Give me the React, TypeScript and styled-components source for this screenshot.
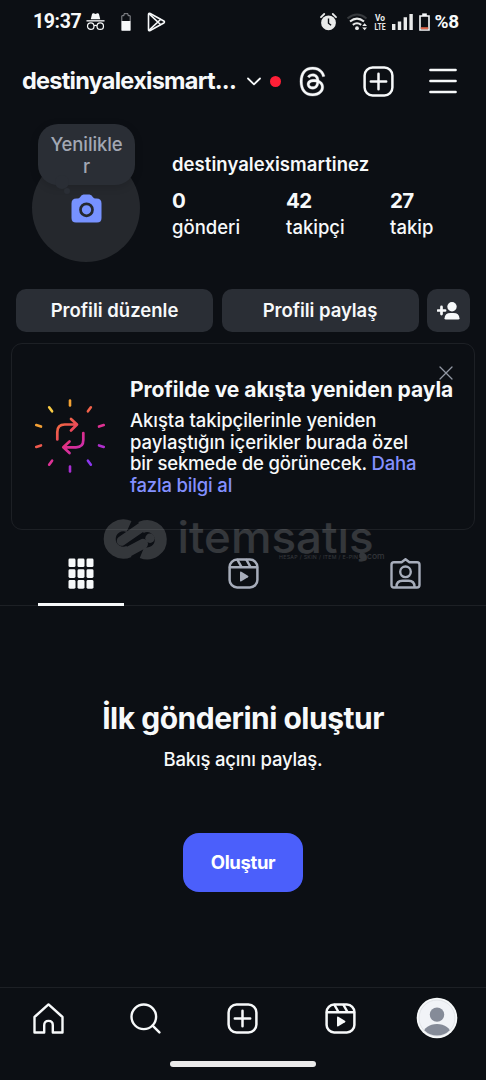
import React from "react";
import styled, { createGlobalStyle } from "styled-components";
import { FaThreads } from "react-icons/fa6";

const GlobalStyle = createGlobalStyle`
  * { box-sizing: border-box; }
  body { margin: 0; background: #0c0f14; }
  button { border: 0; padding: 0; margin: 0; background: none; color: inherit; font: inherit; }
`;

const Screen = styled.div`
  position: relative;
  display: flex;
  flex-direction: column;
  width: 486px;
  height: 1080px;
  overflow: hidden;
  background: #0c0f14;
  color: #f7f9fa;
  font-family: Inter, "Liberation Sans", sans-serif;
`;

const Text = styled.span<{ $size: number; $line: number; $weight?: number; $track?: number; $color?: string; $top?: number }>`
  display: block;
  white-space: nowrap;
  margin-top: ${(p) => p.$top ?? 0}px;
  font-size: ${(p) => p.$size}px;
  line-height: ${(p) => p.$line}px;
  font-weight: ${(p) => p.$weight ?? 500};
  letter-spacing: ${(p) => p.$track ?? 0}px;
  color: ${(p) => p.$color ?? "inherit"};
`;

const StatusBar = styled.div`
  display: flex;
  justify-content: space-between;
  align-items: center;
  height: 43px;
  padding: 0 27px 0 33px;
  font-family: Roboto, sans-serif;
`;

const Group = styled.div<{ $gap?: number; $left?: number }>`
  display: flex;
  align-items: center;
  gap: ${(p) => p.$gap ?? 0}px;
  margin-left: ${(p) => p.$left ?? 0}px;
`;

const Header = styled.header`
  display: flex;
  align-items: center;
  justify-content: space-between;
  height: 76px;
  padding: 0 29px 0 22px;
`;

const UserName = styled.div`
  width: 216px;
`;

const RedDot = styled.i`
  width: 11px;
  height: 11px;
  border-radius: 50%;
  background: #ff1f37;
`;

const Profile = styled.section`
  display: flex;
  height: 170px;
  padding: 35px 0 0 32px;
`;

const Avatar = styled.div`
  position: relative;
  display: flex;
  align-items: center;
  justify-content: center;
  width: 108px;
  height: 108px;
  border-radius: 50%;
  background: #25282d;
`;

const Bubble = styled.div`
  position: absolute;
  left: 6px;
  top: -30px;
  width: 97px;
  height: 61px;
  padding-top: 9px;
  border-radius: 20px;
  background: #2a2e35;
  box-shadow: 0 2px 8px rgba(0, 0, 0, 0.15);
  text-align: center;
  &::before,
  &::after {
    content: "";
    position: absolute;
    border-radius: 50%;
    background: #2a2e35;
  }
  &::before { left: 17px; top: 51px; width: 14px; height: 14px; }
  &::after { left: 26px; top: 64px; width: 6px; height: 6px; }
`;

const Details = styled.div`
  margin-top: -2px;
  padding-left: 32px;
`;

const Stats = styled.div`
  display: grid;
  grid-template-columns: 114px 104px 60px;
  margin-top: 12px;
`;

const Actions = styled.div`
  display: grid;
  grid-template-columns: 197px 197px 43px;
  gap: 8px 8.5px;
  height: 43px;
  margin: 0 16px;
`;

const ActionButton = styled.button`
  display: flex;
  align-items: center;
  justify-content: center;
  border-radius: 10px;
  background: #2a2e35;
`;

const Card = styled.section`
  position: relative;
  display: flex;
  width: 464px;
  height: 187px;
  margin: 11px 0 0 11px;
  border: 1px solid #1d2025;
  border-radius: 11px;
`;

const CardArt = styled.div`
  width: 118px;
  padding: 54px 0 0 21px;
`;

const CardBody = styled.div`
  padding-top: 33px;
`;

const CardText = styled.div`
  margin-top: 7px;
`;

const Accent = styled.span`
  color: #8390ff;
`;

const CloseIcon = styled.svg`
  position: absolute;
  left: 427px;
  top: 22px;
`;

const Tabs = styled.nav`
  display: grid;
  grid-template-columns: repeat(3, 1fr);
  height: 76px;
  border-bottom: 1px solid #1d2025;
`;

const Tab = styled.button<{ $active?: boolean }>`
  display: flex;
  justify-content: center;
  height: 76px;
  margin: 0 38px;
  padding-top: 28px;
  border-bottom: ${(p) => (p.$active ? "3px solid #f7f9fa" : "0")};
  color: ${(p) => (p.$active ? "#f7f9fa" : "#a7adbb")};
`;

const Empty = styled.main`
  display: flex;
  flex: 1;
  flex-direction: column;
  align-items: center;
  padding-top: 92px;
`;

const CreateButton = styled.button`
  display: flex;
  align-items: center;
  justify-content: center;
  width: 120px;
  height: 59px;
  margin-top: 62px;
  border-radius: 16px;
  background: #4b5ffb;
  color: #fff;
`;

const BottomNav = styled.nav`
  display: grid;
  grid-template-columns: repeat(5, 1fr);
  height: 74px;
  border-top: 1px solid #1d2025;
`;

const NavItem = styled.button`
  display: flex;
  align-items: center;
  justify-content: center;
  height: 60px;
`;

const GestureArea = styled.div`
  display: flex;
  justify-content: center;
  height: 19px;
`;

const GestureBar = styled.i`
  width: 146px;
  height: 6px;
  border-radius: 3px;
  background: #ebebeb;
`;

const Watermark = styled.svg`
  position: absolute;
  left: 100px;
  top: 505px;
  opacity: 0.165;
  pointer-events: none;
`;

const line = { fill: "none", stroke: "currentColor", strokeLinecap: "round", strokeLinejoin: "round" } as const;

const Incognito = () => (
  <svg width="19" height="19" viewBox="0 0 20 19">
    <path d="M5 7 6.3 1.8Q6.8.4 8.2.9L10 1.5l1.8-.6q1.4-.5 1.9.9L15 7z" fill="#f7f9fa" />
    <path d="M.5 8.8h19" stroke="#f7f9fa" strokeWidth="1.4" />
    <g fill="none" stroke="#f7f9fa" strokeWidth="1.3">
      <circle cx="5" cy="14.4" r="3.4" />
      <circle cx="15" cy="14.4" r="3.4" />
      <path d="M8.4 14q1.6-1 3.2 0" />
    </g>
  </svg>
);

const BatteryHalf = () => (
  <svg width="10" height="18" viewBox="0 0 10 18">
    <path d="M3 .7h4v2h2.2v14.6H.8V2.7H3z" fill="none" stroke="#8e9195" strokeWidth="1" />
    <path d="M.6 8h8.8v9.6H.6z" fill="#f7f9fa" />
  </svg>
);

const PlayStore = () => (
  <svg width="19" height="20" viewBox="0 0 19 20">
    <g {...line} stroke="#f7f9fa" strokeWidth="1.6">
      <path d="M1.5 2.6Q1.5.8 3.2 1.5L16.8 9q1.3 1 0 2L3.2 18.5q-1.7.7-1.7-1.1z" />
      <path d="M2.2 1.8 13.5 12.5M2.2 18.2 13.5 7.5" />
    </g>
  </svg>
);

const Alarm = () => (
  <svg width="17" height="18" viewBox="0 0 17 18">
    <circle cx="8.5" cy="9.8" r="7.4" fill="#e9eaea" />
    <path d="M1 4.2 4.2 1M16 4.2 12.8 1" stroke="#e9eaea" strokeWidth="1.8" strokeLinecap="round" />
    <path d="M8.5 5.6v4.6l2.6 2" fill="none" stroke="#0c0f14" strokeWidth="1.4" />
  </svg>
);

const Wifi = () => (
  <svg width="21" height="18" viewBox="0 0 21 18">
    <g fill="none" strokeWidth="2">
      <path d="M.5 5.4Q10-2.4 19.5 5.4" stroke="#36393d" />
      <path d="M3 8.6q7-6 14 0" stroke="#e9eaea" />
      <path d="M5.8 11.9q4.2-3.4 8.4 0" stroke="#e9eaea" />
    </g>
    <circle cx="10" cy="15.2" r="1.9" fill="#e9eaea" />
    <path d="m15.2 13 2.4-2.8L20 13zM15.2 14.4l2.4 2.8 2.4-2.8z" fill="#e9eaea" />
  </svg>
);

const VoLte = () => (
  <svg width="12" height="26" viewBox="0 -5 12 26" overflow="visible" fill="#e9eaea" fontFamily="Roboto" fontWeight="700">
    <text x="1" y="6.8" fontSize="8.4" textLength="10" lengthAdjust="spacingAndGlyphs">Vo</text>
    <text x="0.5" y="16.2" fontSize="8.4" textLength="11" lengthAdjust="spacingAndGlyphs">LTE</text>
  </svg>
);

const Signal = () => (
  <svg width="21" height="17" viewBox="0 0 21 17" fill="#e9eaea">
    <path d="M0 11h3.4v6H0zM5.8 8.4h3.4V17H5.8zM11.6 4.2H15V17h-3.4zM17.4 1h3.4v16h-3.4z" />
  </svg>
);

const BatteryLow = () => (
  <svg width="11" height="18" viewBox="0 0 11 18">
    <path d="M1 3h9v14H1z" fill="none" stroke="#f7f9fa" strokeWidth="1.6" />
    <path d="M3.2.4h4.6V3H3.2z" fill="#f7f9fa" />
    <path d="M1.8 14.2h7.4v2H1.8z" fill="#e0664a" />
  </svg>
);

const Chevron = () => (
  <svg width="14" height="9" viewBox="0 0 14 9">
    <path d="m1 1.5 6 5.8 6-5.8" {...line} strokeWidth="1.8" />
  </svg>
);

const PlusSquare = () => (
  <svg width="31" height="31" viewBox="0 0 31 31" {...line} strokeWidth="2.5">
    <rect x="1.6" y="1.6" width="27.8" height="27.8" rx="8" />
    <path d="M15.5 7.8v15.4M7.8 15.5h15.4" />
  </svg>
);

const Menu = () => (
  <svg width="28" height="26" viewBox="0 0 28 26">
    <path d="M1.4 2h25.2M1.4 13h25.2M1.4 24h25.2" {...line} strokeWidth="2.5" />
  </svg>
);

const Camera = () => (
  <svg width="31" height="29" viewBox="0 0 31 29">
    <path d="M9 3.2Q10.5.5 12.5.5h6q2 0 3.5 2.7.8 1.3 2.5 1.3h1q5 0 5 5V24q0 4.5-4.5 4.5H5Q.5 28.5.5 24V9.5q0-5 5-5h1Q8.2 4.5 9 3.2z" fill="#7792ff" />
    <circle cx="15.5" cy="15.8" r="6" fill="none" stroke="#25282d" strokeWidth="2.7" />
  </svg>
);

const AddPerson = () => (
  <svg width="23" height="18" viewBox="0 0 23 18">
    <path d="M4.5 4.9v7.2M.9 8.5h7.2" {...line} strokeWidth="2.7" />
    <circle cx="15" cy="4.8" r="4.7" fill="currentColor" />
    <path d="M7.5 16.3q.4-5.3 6-5.3h3q5.6 0 6 5.3 0 1.3-1.3 1.3H8.8q-1.3 0-1.3-1.3z" fill="currentColor" />
  </svg>
);

const rays: [number, string][] = [
  [0, "#f3a234"], [36, "#f2624a"], [72, "#df3293"], [108, "#b02fcd"], [144, "#8a37ee"],
  [180, "#a92ed3"], [216, "#dd3296"], [252, "#f05a4e"], [288, "#f5a035"], [324, "#f9cb45"],
];

const RepostArt = () => (
  <svg width="74" height="76" viewBox="-37 -38 74 76">
    <defs>
      <linearGradient id="warm" gradientUnits="userSpaceOnUse" x1="-14" y1="-16" x2="14" y2="16">
        <stop offset="0" stopColor="#f5763a" />
        <stop offset="0.5" stopColor="#e8405f" />
        <stop offset="0.6" stopColor="#e02f86" />
        <stop offset="1" stopColor="#c72dbb" />
      </linearGradient>
    </defs>
    {rays.map(([angle, color]) => (
      <path key={angle} d="M0-35.5v5" transform={`rotate(${angle})`} stroke={color} strokeWidth="2.6" strokeLinecap="round" />
    ))}
    <g fill="none" stroke="url(#warm)" strokeWidth="2.7" strokeLinecap="round" strokeLinejoin="round">
      <path d="M-12.7 3.5V-4Q-12.7-11.5-5.2-11.5H6.5M1-17l6 5.5L1-5.5" />
      <path d="M13.3-3V4Q13.3 11.3 6 11.3H-6M-.5 5.5-6.7 11.3-.5 17" />
    </g>
  </svg>
);

const Grid = () => (
  <svg width="26" height="31" viewBox="0 0 26 31" fill="currentColor">
    {[0, 1, 2].flatMap((r) =>
      [0, 1, 2].map((c) => <rect key={`${r}${c}`} x={0.5 + c * 9} y={0.5 + r * 10.8} width="7" height="8.6" rx="1.4" />)
    )}
  </svg>
);

const Reels = () => (
  <svg width="31" height="31" viewBox="0 0 31 31">
    <g {...line} strokeWidth="2.5">
      <rect x="1.6" y="1.6" width="27.8" height="27.8" rx="7.5" />
      <path d="M2 9.2h27M9.5 2l4 7M18.5 2l4 7" />
    </g>
    <path d="M12 14.6q0-1.600 1.400-.8l6.500 3.900q1.300.8 0 1.600l-6.500 3.900q-1.400.8-1.400-.8z" fill="currentColor" />
  </svg>
);

const Tagged = () => (
  <svg width="31" height="31" viewBox="0 0 31 31">
    <g {...line} strokeWidth="2.4">
      <path d="M4 4.2h7.6L15.5 1.2l3.9 3H27q2.5 0 2.5 2.5v20.3q0 2.5-2.5 2.5H4q-2.5 0-2.5-2.5V6.7Q1.5 4.2 4 4.2z" />
      <circle cx="15.5" cy="13.8" r="5.3" />
      <path d="M6.5 28.8q0-6 6-6h6q6 0 6 6" />
    </g>
  </svg>
);

const Home = () => (
  <svg width="31" height="31" viewBox="0 0 31 31">
    <path d="M1.5 14 15.5 1.4 29.5 14v15.5H19.8v-7.3q0-4.3-4.3-4.3t-4.3 4.3v7.3H1.5z" {...line} strokeWidth="2.4" />
  </svg>
);

const Search = () => (
  <svg width="31" height="31" viewBox="0 0 31 31">
    <g {...line} strokeWidth="2.4">
      <circle cx="13.8" cy="13.8" r="12.3" />
      <path d="m22.6 22.6 6.8 6.8" />
    </g>
  </svg>
);

const NavAvatar = () => (
  <svg width="42" height="42" viewBox="0 0 42 42">
    <defs>
      <clipPath id="face"><circle cx="21" cy="21" r="17.6" /></clipPath>
    </defs>
    <circle cx="21" cy="21" r="20.3" fill="#f7f9fa" />
    <circle cx="21" cy="21" r="18" fill="#f1f3f7" stroke="#dadde2" strokeWidth=".8" />
    <g fill="#858b98" clipPath="url(#face)">
      <circle cx="21" cy="17.6" r="7.2" />
      <ellipse cx="21" cy="37.5" rx="14" ry="10.5" />
    </g>
  </svg>
);

const stats = [["0", "gönderi"], ["42", "takipçi"], ["27", "takip"]];

export default function App() {
  return (
    <Screen>
      <GlobalStyle />
      <StatusBar>
        <Group>
          <Text $size={19.5} $line={24} $weight={700} $track={-0.4}>19:37</Text>
          <Group $left={5} $gap={16}>
            <Incognito />
            <BatteryHalf />
            <PlayStore />
          </Group>
        </Group>
        <Group $gap={6}>
          <Group $gap={10}><Alarm /><Wifi /></Group>
          <VoLte />
          <Signal />
          <BatteryLow />
          <Group $left={-2}><Text $size={19} $line={24} $weight={700} $track={-0.2}>%8</Text></Group>
        </Group>
      </StatusBar>

      <Header>
        <Group $gap={9}>
          <UserName><Text $size={23.5} $line={30} $weight={700} $track={-0.75}>destinyalexismart...</Text></UserName>
          <Chevron />
          <RedDot />
        </Group>
        <Group $gap={35}>
          <FaThreads size={31} stroke="currentColor" strokeWidth={5} />
          <PlusSquare />
          <Menu />
        </Group>
      </Header>

      <Profile>
        <Avatar>
          <Camera />
          <Bubble>
            <Text $size={18.5} $line={22} $track={-0.1} $color="#a2a8b4">Yenilikle</Text>
            <Text $size={18.5} $line={22} $color="#a2a8b4">r</Text>
          </Bubble>
        </Avatar>
        <Details>
          <Text $size={18.5} $line={24} $weight={600} $track={0.06}>destinyalexismartinez</Text>
          <Stats>
            {stats.map(([value, label]) => (
              <div key={label}>
                <Text $size={20.5} $line={26} $weight={700} $track={-0.6}>{value}</Text>
                <Text $size={18.5} $line={26}>{label}</Text>
              </div>
            ))}
          </Stats>
        </Details>
      </Profile>

      <Actions>
        <ActionButton><Text $size={18.5} $line={24} $weight={600} $top={-1}>Profili düzenle</Text></ActionButton>
        <ActionButton><Text $size={18.5} $line={24} $weight={600} $top={-1} $track={-0.05}>Profili paylaş</Text></ActionButton>
        <ActionButton><AddPerson /></ActionButton>
      </Actions>

      <Card>
        <CardArt><RepostArt /></CardArt>
        <CardBody>
          <Text $size={21} $line={26} $weight={700} $track={-0.05}>Profilde ve akışta yeniden payla</Text>
          <CardText>
            <Text $size={18.5} $line={21.5} $track={-0.06}>Akışta takipçilerinle yeniden</Text>
            <Text $size={18.5} $line={21.5} $track={-0.07}>paylaştığın içerikler burada özel</Text>
            <Text $size={18.5} $line={21.5} $track={-0.18}>bir sekmede de görünecek. <Accent>Daha</Accent></Text>
            <Text $size={18.5} $line={21.5} $track={-0.18}><Accent>fazla bilgi al</Accent></Text>
          </CardText>
        </CardBody>
        <CloseIcon width="14" height="14" viewBox="0 0 14 14">
          <path d="m1 1 12 12M13 1 1 13" stroke="#9298a4" strokeWidth="1.3" strokeLinecap="round" />
        </CloseIcon>
      </Card>

      <Tabs>
        <Tab $active><Grid /></Tab>
        <Tab><Reels /></Tab>
        <Tab><Tagged /></Tab>
      </Tabs>

      <Empty>
        <Text $size={30} $line={40} $weight={700} $track={-0.5}>İlk gönderini oluştur</Text>
        <Text $size={18.5} $line={24} $top={9} $track={-0.18}>Bakış açını paylaş.</Text>
        <CreateButton><Text $size={18.5} $line={24} $weight={700} $track={-0.35} $top={-1}>Oluştur</Text></CreateButton>
      </Empty>

      <BottomNav>
        <NavItem><Home /></NavItem>
        <NavItem><Search /></NavItem>
        <NavItem><PlusSquare /></NavItem>
        <NavItem><Reels /></NavItem>
        <NavItem><NavAvatar /></NavItem>
      </BottomNav>
      <GestureArea><GestureBar /></GestureArea>

      <Watermark width="300" height="70" viewBox="0 -10 300 70" fill="#fff" fontFamily="Inter, sans-serif">
        <g fill="none" stroke="#fff" strokeWidth="12">
          <path d="M29 11.5A13.700 13.700 0 1 0 29 36.500" />
          <path d="M26 38 43 28.800" strokeLinecap="round" strokeWidth="10" />
          <path d="M42 37.500A13.700 13.700 0 1 0 41 12.500" />
          <path d="M44 10.500 21.500 26" strokeLinecap="round" strokeWidth="9.500" />
        </g>
        <circle cx="50" cy="23.200" r="4.700" />
        <text x="77.500" y="37.500" fontSize="44" fontWeight="500" textLength="196" lengthAdjust="spacingAndGlyphs">itemsatış</text>
        <text x="179" y="43.500" fontSize="5.200" textLength="79" lengthAdjust="spacing">HESAP / SKIN / ITEM / E-PIN</text>
        <circle cx="262.500" cy="41" r="3.300" />
        <text x="267" y="43.500" fontSize="8.500" textLength="17.500" lengthAdjust="spacingAndGlyphs">com</text>
      </Watermark>
    </Screen>
  );
}
